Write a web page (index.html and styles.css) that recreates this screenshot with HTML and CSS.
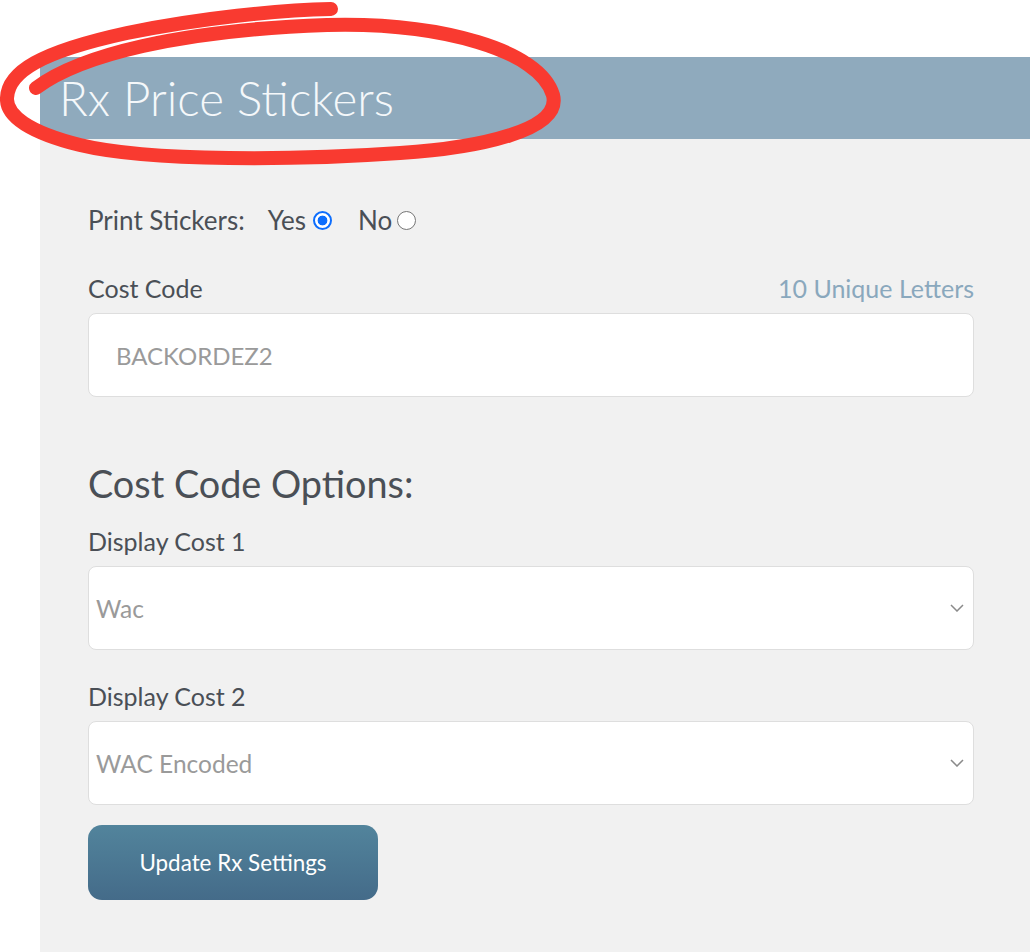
FILE: index.html
```html
<!DOCTYPE html>
<html lang="en">
<head>
<meta charset="utf-8">
<title>Rx Price Stickers</title>
<link rel="stylesheet" href="styles.css">
</head>
<body>
<div class="page">
  <section class="panel">
    <header class="panel-header">
      <h2 class="panel-title">Rx Price Stickers</h2>
    </header>
    <div class="panel-body">
      <div class="radio-row">
        <span class="radio-label">Print Stickers:</span>
        <label class="radio-option">Yes <span class="radio radio-on"></span></label>
        <label class="radio-option radio-option-no">No <span class="radio"></span></label>
      </div>

      <div class="field-head">
        <span class="field-label">Cost Code</span>
        <span class="field-hint">10 Unique Letters</span>
      </div>
      <div class="text-input">BACKORDEZ2</div>

      <h3 class="section-title">Cost Code Options:</h3>

      <div class="field-head field-head-tight">
        <span class="field-label">Display Cost 1</span>
      </div>
      <div class="select-box">
        <span class="select-value">Wac</span>
        <svg class="chevron" width="14" height="8" viewBox="0 0 14 8"><path d="M1 1 L7 7 L13 1" fill="none" stroke="#8a8a8a" stroke-width="1.5"/></svg>
      </div>

      <div class="field-head field-head-second">
        <span class="field-label">Display Cost 2</span>
      </div>
      <div class="select-box">
        <span class="select-value">WAC Encoded</span>
        <svg class="chevron" width="14" height="8" viewBox="0 0 14 8"><path d="M1 1 L7 7 L13 1" fill="none" stroke="#8a8a8a" stroke-width="1.5"/></svg>
      </div>

      <button class="btn-update" type="button">Update Rx Settings</button>
    </div>
  </section>
</div>

<svg class="annotation" width="580" height="180" viewBox="0 0 580 180">
  <path d="M36 88 C 80 55 180 30 327 25 C 440 22 540 50 553 95 C 562 130 480 148 400 153 C 300 160 150 162 80 145 C 28 132 6 115 7 98 C 8 72 40 52 127 33 C 200 18 280 10 331 9" fill="none" stroke="#f93a30" stroke-width="14" stroke-linecap="round" stroke-linejoin="round"/>
</svg>
</body>
</html>
```

FILE: styles.css
```css
* { box-sizing: border-box; }

html, body {
  margin: 0;
  padding: 0;
  background: #ffffff;
}

body {
  font-family: Lato, "Liberation Sans", sans-serif;
  color: #4a4f56;
  height: 952px;
  overflow: hidden;
  position: relative;
}

.page {
  padding-top: 57px;
  padding-left: 40px;
}

.panel {
  background: #f1f1f1;
  min-height: 900px;
}

.panel-header {
  background: #8faabd;
  height: 82px;
  display: flex;
  align-items: center;
  padding-left: 19px;
}

.panel-title {
  margin: 0;
  font-weight: 300;
  font-size: 47.5px;
  color: #f5f8fa;
  line-height: 1;
}

.panel-body {
  padding: 63px 56px 40px 48px;
  display: flex;
  flex-direction: column;
  align-items: stretch;
}

.radio-row {
  display: flex;
  align-items: center;
  height: 36px;
  font-size: 26px;
}

.radio-label { margin-right: 23px; }

.radio-option {
  display: flex;
  align-items: center;
  gap: 7px;
  margin-right: 26px;
}

.radio-option-no { gap: 5px; }

.radio {
  width: 19px;
  height: 19px;
  border-radius: 50%;
  border: 1.5px solid #767676;
  background: #fff;
  display: inline-block;
}

.radio-on {
  border: 2px solid #0d6efd;
  background: radial-gradient(circle, #0d6efd 0 4.6px, #ffffff 5.2px);
}

.field-head {
  display: flex;
  justify-content: space-between;
  align-items: center;
  height: 36px;
  margin-top: 32px;
  font-size: 25px;
}

.field-head-tight { margin-top: 14px; }
.field-head-second { margin-top: 28px; }

.field-hint { color: #8aa8bd; }

.text-input,
.select-box {
  margin-top: 7px;
  height: 84px;
  background: #ffffff;
  border: 1px solid #dedede;
  border-radius: 8px;
  display: flex;
  align-items: center;
  font-size: 24px;
  color: #9a9a9a;
}

.text-input { padding-left: 27px; }

.select-box {
  padding-left: 7px;
  padding-right: 9px;
  justify-content: space-between;
  font-size: 24.5px;
}

.section-title {
  margin: 62px 0 0;
  font-size: 37.8px;
  font-weight: 400;
  line-height: 50px;
  color: #4a4f56;
}

.btn-update {
  margin-top: 20px;
  align-self: flex-start;
  width: 290px;
  height: 75px;
  border: none;
  border-radius: 14px;
  background: linear-gradient(#52849c, #446b89);
  color: #ffffff;
  font-family: Lato, "Liberation Sans", sans-serif;
  font-size: 22.4px;
  cursor: pointer;
}

.annotation {
  position: absolute;
  left: 0;
  top: 0;
  pointer-events: none;
}
```
